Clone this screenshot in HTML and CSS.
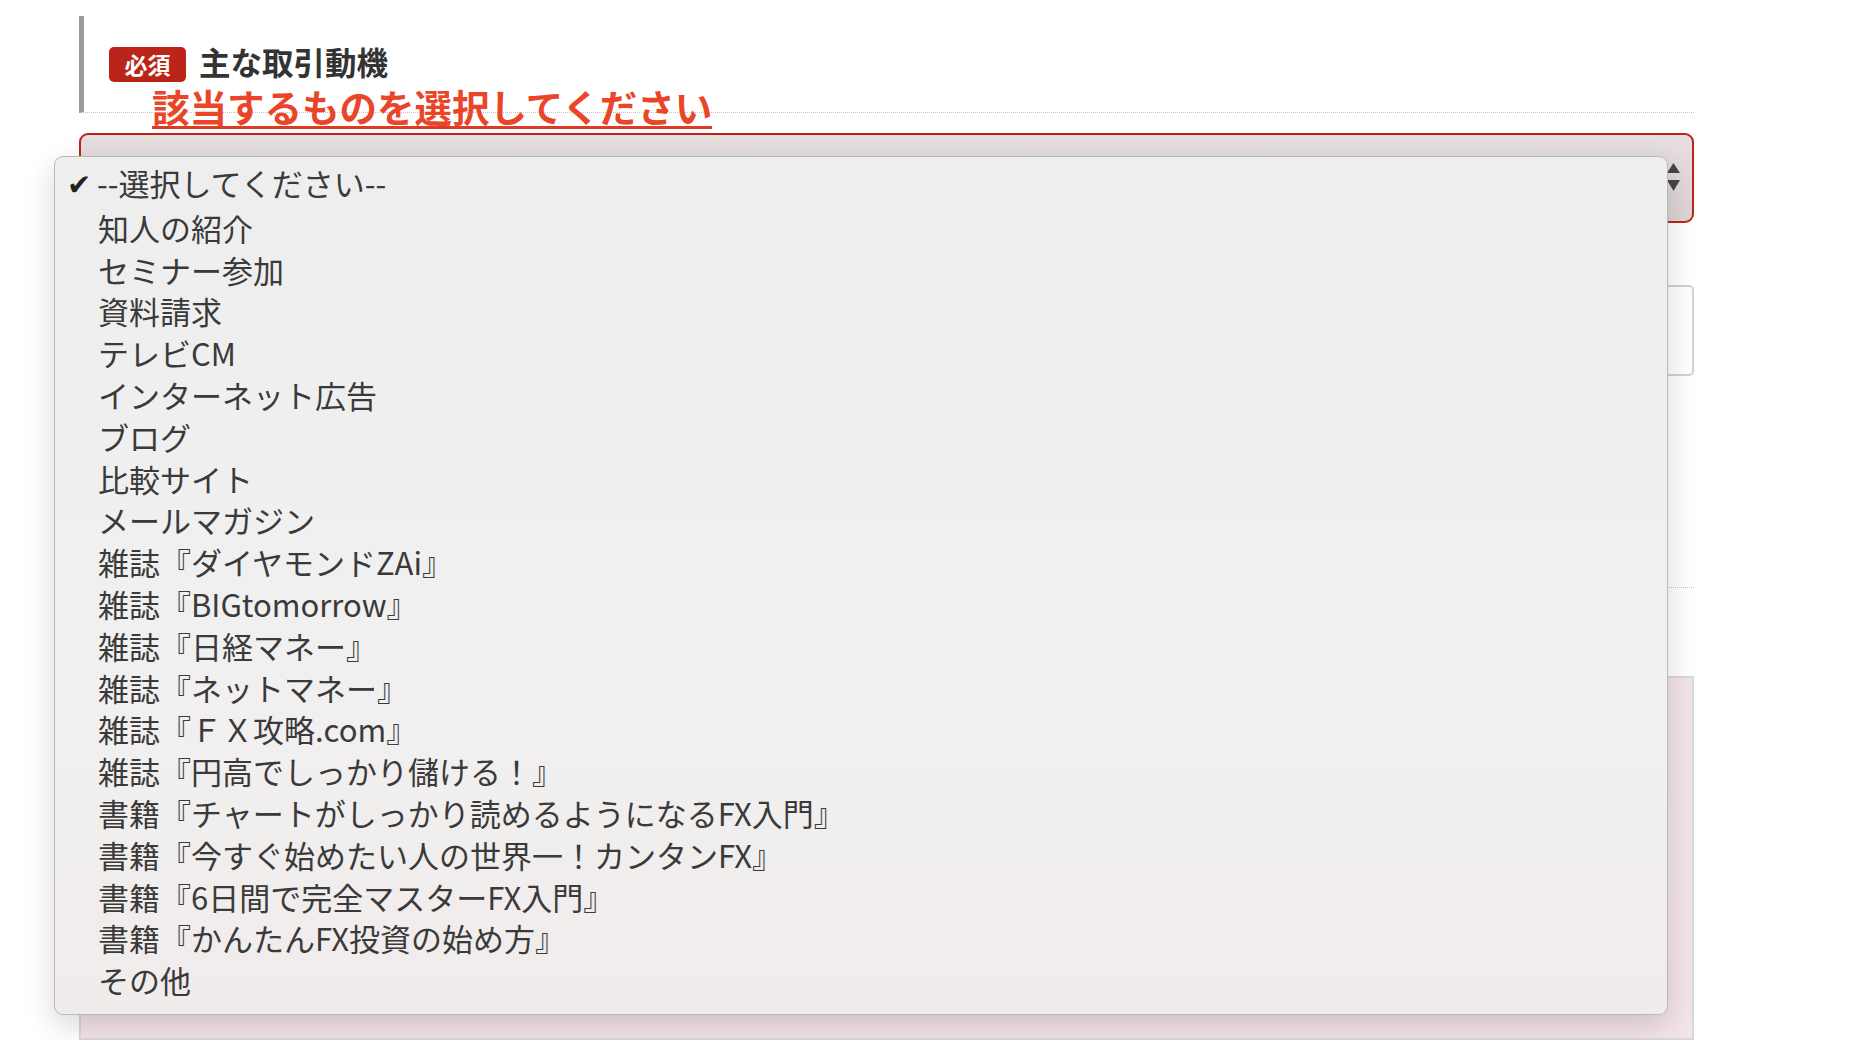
FILE: index.html
```html
<!DOCTYPE html>
<html lang="ja">
<head>
    <meta charset="UTF-8">
    <meta name="viewport" content="width=device-width, initial-scale=1.0">
    <title>お問い合わせフォーム</title>
    <link rel="stylesheet" href="styles.css">
</head>
<body>
    <div class="form">
        <div class="field-head">
            <span class="badge">必須</span>
            <span class="field-title">主な取引動機</span>
        </div>
        <div class="note">該当するものを選択してください</div>

        <div class="select-wrap">
            <div class="select-box">
                <svg class="select-arrows" width="13" height="28" viewBox="0 0 13 28">
                    <path d="M6.5 0 L13 10 L0 10 Z" fill="#444"/>
                    <path d="M0 17 L13 17 L6.5 28 Z" fill="#444"/>
                </svg>
            </div>

            <ul class="dropdown">
                <li class="checked">--選択してください--</li>
                <li>知人の紹介</li>
                <li>セミナー参加</li>
                <li>資料請求</li>
                <li>テレビCM</li>
                <li>インターネット広告</li>
                <li>ブログ</li>
                <li>比較サイト</li>
                <li>メールマガジン</li>
                <li>雑誌『ダイヤモンドZAi』</li>
                <li>雑誌『BIGtomorrow』</li>
                <li>雑誌『日経マネー』</li>
                <li>雑誌『ネットマネー』</li>
                <li>雑誌『ＦＸ攻略.com』</li>
                <li>雑誌『円高でしっかり儲ける！』</li>
                <li>書籍『チャートがしっかり読めるようになるFX入門』</li>
                <li>書籍『今すぐ始めたい人の世界一！カンタンFX』</li>
                <li>書籍『6日間で完全マスターFX入門』</li>
                <li>書籍『かんたんFX投資の始め方』</li>
                <li>その他</li>
            </ul>
        </div>

        <div class="text-input"></div>

        <div class="field-head second"></div>

        <div class="textarea"></div>
    </div>
</body>
</html>
```

FILE: styles.css
```css
body {
    margin: 0;
    background-color: #fff;
    font-family: "Noto Sans CJK JP", "Noto Sans", sans-serif;
    color: #333;
}

.form {
    width: 1615px;
    margin-left: 79px;
    padding-top: 16px;
}

.field-head {
    box-sizing: border-box;
    height: 97px;
    padding: 31px 0 0 25px;
    border-left: 5px solid #9b9b9b;
    border-bottom: 1px dotted #c4c4c4;
    display: flex;
    align-items: flex-start;
    gap: 13px;
}

.badge {
    width: 77px;
    height: 35px;
    border-radius: 5px;
    background-color: #bb2519;
    color: #fff;
    font-size: 23px;
    font-weight: bold;
    line-height: 35px;
    text-align: center;
}

.field-title {
    font-size: 31.5px;
    font-weight: bold;
    line-height: 31px;
    margin-top: -1px;
    color: #333;
}

.note {
    width: fit-content;
    margin: -26px 0 0 73px;
    padding-bottom: 2px;
    font-size: 37.5px;
    font-weight: bold;
    line-height: 37px;
    color: #ea4529;
    border-bottom: 3px solid #e23a22;
}

.select-wrap {
    position: relative;
    margin-top: 4px;
}

.select-box {
    box-sizing: border-box;
    height: 90px;
    border: 2px solid #bd2419;
    border-radius: 9px;
    background: linear-gradient(#e6dedf, #ddd3d5);
    display: flex;
    justify-content: flex-end;
    align-items: center;
    padding-right: 12px;
}

.select-arrows {
    display: block;
    margin-top: -2px;
}

.dropdown {
    position: absolute;
    top: 23px;
    left: -25px;
    width: 1614px;
    box-sizing: border-box;
    margin: 0;
    padding: 5px 0 13px;
    list-style: none;
    background: linear-gradient(#efeeee, #f1f0f0 55%, #f1ecec);
    border: 1px solid rgba(0, 0, 0, 0.22);
    border-radius: 9px;
    box-shadow: 0 10px 30px rgba(0, 0, 0, 0.16);
    z-index: 10;
}

.dropdown li {
    padding-left: 43px;
    font-size: 31px;
    line-height: 41.8px;
    color: #3a3a3a;
    white-space: nowrap;
}

.dropdown li.checked::before {
    content: "✔";
    display: inline-block;
    width: 30px;
    margin-left: -31px;
    font-family: "DejaVu Sans", sans-serif;
    font-size: 29px;
    color: #222;
    vertical-align: 1px;
}

.text-input {
    box-sizing: border-box;
    height: 91px;
    margin-top: 62px;
    border: 2px solid #d2d2d2;
    border-radius: 5px;
    background-color: #fff;
}

.field-head.second {
    margin-top: 115px;
}

.textarea {
    box-sizing: border-box;
    height: 364px;
    margin-top: 88px;
    border: 2px solid #d8d8d8;
    background-color: #f3e4e7;
}
```
